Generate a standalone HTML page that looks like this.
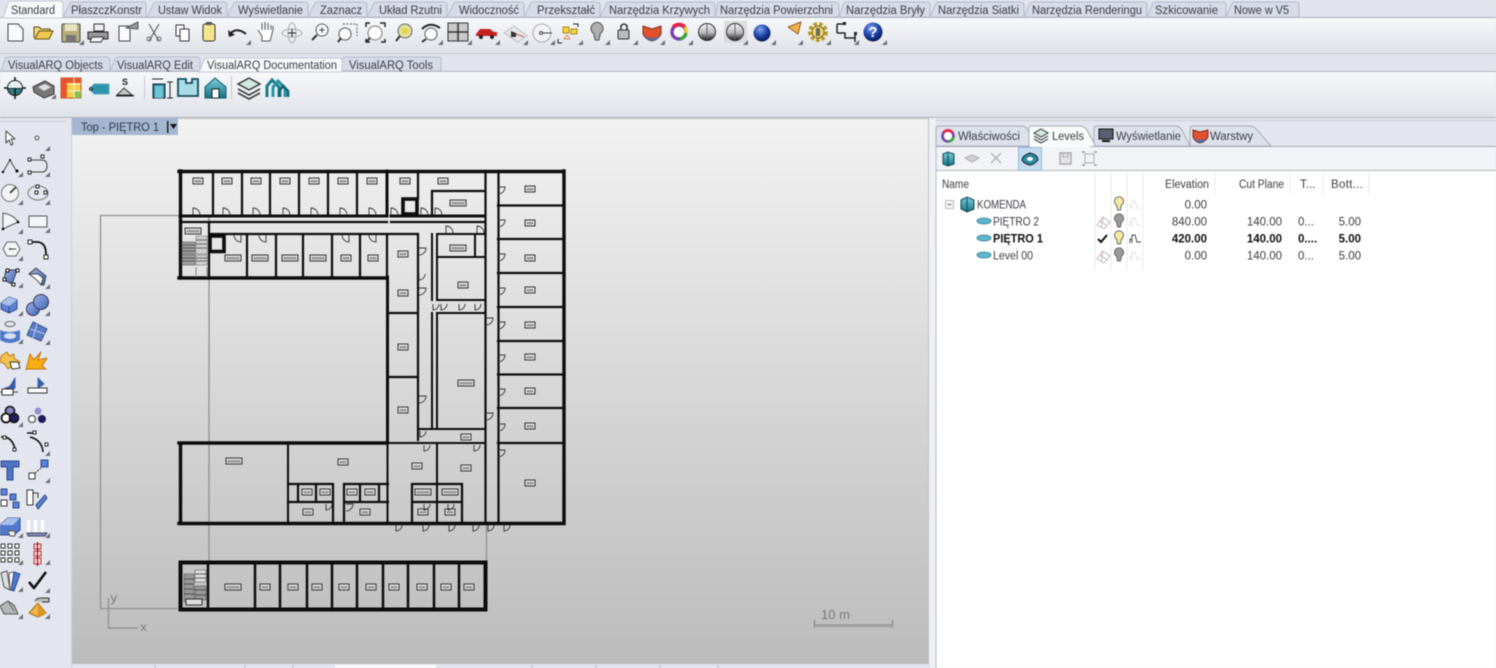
<!DOCTYPE html>
<html lang="pl"><head><meta charset="utf-8"><title>VisualARQ Levels</title>
<style>
html,body{margin:0;padding:0;background:#e3e6ee;width:1496px;height:668px;overflow:hidden}
svg{display:block;filter:blur(.45px)}
text{font-family:"Liberation Sans",sans-serif;font-size:11.5px;fill:#3d3d42}
.v{fill:#2f3a4c}
.r{text-anchor:end}
.b{font-weight:bold;fill:#111}
</style></head><body>
<svg xmlns="http://www.w3.org/2000/svg" width="1496" height="668" viewBox="0 0 1496 668">
<defs>
<linearGradient id="tb" x1="0" y1="0" x2="0" y2="1"><stop offset="0" stop-color="#f7f8fa"/><stop offset="1" stop-color="#dfe2e9"/></linearGradient>
<linearGradient id="vp" x1="0" y1="0" x2="0" y2="1"><stop offset="0" stop-color="#f2f2f2"/><stop offset="1" stop-color="#bcbcbc"/></linearGradient>
<linearGradient id="ball" x1="0" y1="0" x2="0" y2="1"><stop offset="0" stop-color="#f7f7f7"/><stop offset=".55" stop-color="#b8b8b8"/><stop offset="1" stop-color="#111"/></linearGradient>
<radialGradient id="blue" cx=".4" cy=".3" r=".7"><stop offset="0" stop-color="#7fa8ee"/><stop offset=".6" stop-color="#1c3fa8"/><stop offset="1" stop-color="#0a1a50"/></radialGradient>
<linearGradient id="bl" x1="0" y1="0" x2="1" y2="1"><stop offset="0" stop-color="#9db4e6"/><stop offset="1" stop-color="#3f63b5"/></linearGradient>
<linearGradient id="teal" x1="0" y1="0" x2="0" y2="1"><stop offset="0" stop-color="#7fd0dc"/><stop offset="1" stop-color="#14707f"/></linearGradient>
<polygon id="g" points="0,5 5,5 5,0" fill="#6d6f75"/>
<path id="du" d="M0 0V-7A7 7 0 0 1 7 0" fill="none" stroke="#333" stroke-width=".9"/>
<path id="dd" d="M0 0V7A7 7 0 0 1-7 0" fill="none" stroke="#333" stroke-width=".9"/>
<path id="dr" d="M0 0H7A7 7 0 0 1 0 7" fill="none" stroke="#333" stroke-width=".9"/>
<path id="db" d="M0 0V6A6 6 0 0 0 6 0" fill="none" stroke="#333" stroke-width=".9"/>
<g id="s"><rect x="-5" y="-3" width="10" height="6" fill="#e6e6e6" stroke="#333" stroke-width="1"/><rect x="-3.5" y="-1" width="7" height="2.5" fill="#999"/></g>
<g id="m"><rect x="-8" y="-3" width="16" height="6" fill="#e0e0e0" stroke="#333" stroke-width="1"/><rect x="-6.5" y="-1" width="13" height="2.5" fill="#999"/></g>
<g id="bulb"><path d="M0-6A3.8 3.8 0 0 1 2 1L1.2 5H-1.2L-2 1A3.8 3.8 0 0 1 0-6Z" stroke="#666" stroke-width=".8"/></g>
<g id="lamp"><path d="M-5 5V1H-3V5M-3 0V-3H0L2 4H6" fill="none" stroke-width="1"/></g>
<g id="lv"><ellipse rx="7" ry="3" fill="#5eb7cc" stroke="#2d7d90" stroke-width=".8"/></g>
<g id="ch"><path d="M-5 0L-2 3 4-4" fill="none" stroke-width="2"/></g>
</defs>

<rect width="1496" height="668" fill="#e3e6ee"/>
<rect y="0" width="1496" height="17" fill="#e1e4ec"/>
<rect y="17" width="1496" height="1" fill="#aeb2ba"/>
<rect y="18" width="1496" height="35" fill="url(#tb)"/>
<rect y="53" width="1496" height="1" fill="#c2c5cc"/>
<rect y="54" width="1496" height="17" fill="#e1e4ec"/>
<rect y="71" width="1496" height="1.5" fill="#aeb1b7"/>
<rect y="72" width="1496" height="45" fill="url(#tb)"/>
<rect y="117" width="1496" height="1" fill="#b2b5bb"/>
<rect x="0" y="121" width="66" height="1" fill="#c9ccd3"/>
<rect x="936" y="120" width="560" height="1" fill="#c9ccd3"/>

<g fill="#d7dbe8" stroke="#b6bbcb" stroke-width="1">
<path d="M63 17L70 3Q71 2 74 2H143Q146 2 146 5V17Z"/>
<path d="M147 17L154 3Q155 2 158 2H223Q227 2 227 5V17Z"/>
<path d="M227 17L234 3Q235 2 238 2H304Q308 2 308 5V17Z"/>
<path d="M308 17L315 3Q316 2 319 2H363Q367 2 367 5V17Z"/>
<path d="M367 17L374 3Q375 2 378 2H443Q447 2 447 5V17Z"/>
<path d="M447 17L454 3Q455 2 458 2H520Q524 2 524 5V17Z"/>
<path d="M524 17L531 3Q532 2 535 2H596Q600 2 600 5V17Z"/>
<path d="M600 17L607 3Q608 2 611 2H711Q715 2 715 5V17Z"/>
<path d="M715 17L718 3Q719 2 722 2H834Q839 2 839 5V17Z"/>
<path d="M839 17L844 3Q845 2 848 2H926Q930 2 930 5V17Z"/>
<path d="M930 17L936 3Q937 2 940 2H1020Q1024 2 1024 5V17Z"/>
<path d="M1024 17L1030 3Q1031 2 1034 2H1143Q1147 2 1147 5V17Z"/>
<path d="M1147 17L1153 3Q1154 2 1157 2H1222Q1226 2 1226 5V17Z"/>
<path d="M1226 17L1232 3Q1233 2 1236 2H1295Q1299 2 1299 5V17Z"/>
</g>
<path d="M3 18L8 3Q9 1 12 1H60Q63 1 63 4V18Z" fill="#f8f9fb" stroke="#c2c6d2"/>
<g>
<text x="11" y="14" textLength="44" lengthAdjust="spacingAndGlyphs">Standard</text>
<text x="71" y="14" textLength="71" lengthAdjust="spacingAndGlyphs">PłaszczKonstr</text>
<text x="158" y="14" textLength="64" lengthAdjust="spacingAndGlyphs">Ustaw Widok</text>
<text x="238" y="14" textLength="65" lengthAdjust="spacingAndGlyphs">Wyświetlanie</text>
<text x="320" y="14" textLength="42" lengthAdjust="spacingAndGlyphs">Zaznacz</text>
<text x="379" y="14" textLength="63" lengthAdjust="spacingAndGlyphs">Układ Rzutni</text>
<text x="459" y="14" textLength="60" lengthAdjust="spacingAndGlyphs">Widoczność</text>
<text x="537" y="14" textLength="58" lengthAdjust="spacingAndGlyphs">Przekształć</text>
<text x="609" y="14" textLength="101" lengthAdjust="spacingAndGlyphs">Narzędzia Krzywych</text>
<text x="720" y="14" textLength="113" lengthAdjust="spacingAndGlyphs">Narzędzia Powierzchni</text>
<text x="846" y="14" textLength="79" lengthAdjust="spacingAndGlyphs">Narzędzia Bryły</text>
<text x="938" y="14" textLength="81" lengthAdjust="spacingAndGlyphs">Narzędzia Siatki</text>
<text x="1032" y="14" textLength="110" lengthAdjust="spacingAndGlyphs">Narzędzia Renderingu</text>
<text x="1155" y="14" textLength="63" lengthAdjust="spacingAndGlyphs">Szkicowanie</text>
<text x="1234" y="14" textLength="55" lengthAdjust="spacingAndGlyphs">Nowe w V5</text>
</g>

<g fill="#d7dbe8" stroke="#b6bbcb">
<path d="M1 71L5 59Q6 57 9 57H106Q110 57 110 60V71Z"/>
<path d="M110 71L115 59Q116 57 119 57H196Q200 57 200 60V71Z"/>
<path d="M342 71V60Q342 57 345 57H438Q441 57 441 60V71Z"/>
</g>
<path d="M199 72L204 60Q205 58 208 58H339Q342 58 342 61V72Z" fill="#f8f9fb" stroke="#c2c6d2"/>
<text x="8" y="69" textLength="95" lengthAdjust="spacingAndGlyphs">VisualARQ Objects</text>
<text x="117" y="69" textLength="76" lengthAdjust="spacingAndGlyphs">VisualARQ Edit</text>
<text x="207" y="69" textLength="130" lengthAdjust="spacingAndGlyphs">VisualARQ Documentation</text>
<text x="349" y="69" textLength="84" lengthAdjust="spacingAndGlyphs">VisualARQ Tools</text>

<g stroke-linejoin="round">
<path d="M8 24H18L23 29V41H8Z" fill="#fbfbfb" stroke="#444"/>
<path d="M34 38V27H39L41 29H50V31H39L35 39H49L53 31H50" fill="#f2d67e" stroke="#5a4a10"/>
<path d="M35 39L39 31H53L49 39Z" fill="#f0c84f" stroke="#6a5512"/>
<rect x="62" y="24" width="18" height="18" rx="1" fill="#b7ae7c" stroke="#4b4a3c"/><rect x="65" y="24" width="12" height="7" fill="#e7e2c2"/><rect x="66" y="35" width="10" height="7" fill="#777"/>
<use href="#g" x="79" y="40"/>
<path d="M94 24H104V31H94Z" fill="#eee" stroke="#333"/><path d="M88 32H108V39H88Z" fill="#999" stroke="#222"/><path d="M92 37H104L101 42H90Z" fill="#f2f2f2" stroke="#333"/>
<path d="M119 26H130V41H119Z" fill="#fbfbfb" stroke="#444"/><path d="M126 28L138 22V29Z" fill="#999" stroke="#555"/>
<path d="M149 24L159 41M159 24L149 41" stroke="#555" stroke-width="1.1" fill="none"/><circle cx="149" cy="39" r="2" fill="none" stroke="#666"/><circle cx="159" cy="39" r="2" fill="none" stroke="#666"/>
<path d="M176 25H184V36H176Z" fill="#fff" stroke="#333"/><path d="M180 29H189V41H180Z" fill="#fff" stroke="#333"/>
<rect x="203" y="24" width="12" height="17" rx="2" fill="#f3e48e" stroke="#333"/><rect x="206" y="22" width="6" height="3" fill="#555"/>
<path d="M229 35Q236 26 246 34" fill="none" stroke="#222" stroke-width="2"/><path d="M228 30L229 37 235 35Z" fill="#222"/><use href="#g" x="246" y="40"/>
<path d="M258 30L262 36V41H270L273 30V26M262 30V23M265 30V22M268 30V23M271 30V25" fill="#fff" stroke="#555" stroke-width="1"/>
<ellipse cx="292" cy="33" rx="10" ry="4" fill="none" stroke="#aaa"/><ellipse cx="292" cy="33" rx="4" ry="10" fill="none" stroke="#aaa"/><path d="M288 33H296M292 29V37" stroke="#222"/>
<circle cx="322" cy="30" r="6" fill="#fff" stroke="#555"/><path d="M317 35L312 40" stroke="#333" stroke-width="2"/><path d="M319 30H325M322 27V33" stroke="#444"/>
<circle cx="345" cy="34" r="6" fill="#fff" stroke="#555"/><path d="M341 38L338 42" stroke="#333" stroke-width="2"/><path d="M343 24H357V36" fill="none" stroke="#555" stroke-dasharray="2 1.5"/>
<circle cx="375" cy="33" r="7" fill="#fff" stroke="#777"/><path d="M370 38L366 42" stroke="#333" stroke-width="2"/><path d="M366 27V23H370M380 23H385V27M366 39V42H370M385 39V42H381" fill="none" stroke="#222" stroke-width="1.5"/>
<circle cx="405" cy="31" r="7" fill="#dfe09d" stroke="#666"/><circle cx="405" cy="31" r="3" fill="#e6d23a"/><path d="M400 36L396 41" stroke="#333" stroke-width="2"/>
<circle cx="431" cy="34" r="6" fill="#fff" stroke="#555"/><path d="M422 29Q430 21 440 28" fill="none" stroke="#222" stroke-width="2"/><path d="M426 39L422 42" stroke="#333" stroke-width="2"/><use href="#g" x="438" y="40"/>
<rect x="448" y="23" width="20" height="18" fill="#c9c9c9" stroke="#333"/><path d="M458 23V41M448 32H468" stroke="#333" stroke-width="1.5"/><use href="#g" x="467" y="40"/>
<path d="M476 34L480 29H490L494 32H497V36H476Z" fill="#c71f1f"/><circle cx="481" cy="37" r="2" fill="#222"/><circle cx="492" cy="37" r="2" fill="#222"/><use href="#g" x="495" y="40"/>
<path d="M504 33L514 26 527 36 518 42Z" fill="#e8e8e8" stroke="#bbb"/><path d="M511 31V37H516V33Z" fill="#333"/><path d="M516 34L524 37" stroke="#c55"/><use href="#g" x="523" y="40"/>
<circle cx="542" cy="33" r="9" fill="#f3f3f3" stroke="#aaa"/><path d="M542 33H552" stroke="#444"/><circle cx="541" cy="33" r="1.5" fill="none" stroke="#444"/><use href="#g" x="550" y="40"/>
<rect x="563" y="27" width="6" height="6" fill="#f4d23c" stroke="#a58a1a"/><rect x="571" y="29" width="6" height="5" fill="#f4d23c" stroke="#a58a1a"/><path d="M567 35L570 39H564Z" fill="none" stroke="#d86"/><path d="M573 24H578V27M558 39V43H562" fill="none" stroke="#222"/><use href="#g" x="578" y="40"/>
<use href="#bulb" transform="translate(597 32) scale(1.6)" fill="#b0b0b0"/><use href="#g" x="605" y="40"/>
<rect x="618" y="30" width="11" height="9" rx="1" fill="#bbb" stroke="#333"/><path d="M621 30V26Q624 22 627 26V30" fill="none" stroke="#333" stroke-width="1.6"/><use href="#g" x="633" y="40"/>
<path d="M643 26L652 29 661 26V34Q658 40 652 41 646 40 643 34Z" fill="#e4502a" stroke="#7a2f1e"/><path d="M645 35Q652 42 660 35L658 39 652 41 647 39Z" fill="#4a6fb5"/><use href="#g" x="660" y="40"/>
<circle cx="679" cy="32" r="7" fill="#fff" stroke="#7a3fb0" stroke-width="3.4"/><path d="M673 27A8 8 0 0 1 685 27" fill="none" stroke="#e24" stroke-width="3.4"/><path d="M686 33A8 8 0 0 1 680 39" fill="none" stroke="#3a3" stroke-width="3.4"/><path d="M685 27A8 8 0 0 1 686 33" fill="none" stroke="#ec3" stroke-width="3.4"/><use href="#g" x="688" y="40"/>
<circle cx="707" cy="32" r="8.5" fill="url(#ball)" stroke="#333"/><path d="M707 24V40" stroke="#666"/>
<rect x="724" y="21" width="23" height="22" fill="#dcdcdc"/><circle cx="735" cy="32" r="8.5" fill="url(#ball)" stroke="#333"/><path d="M735 24V40" stroke="#666"/><use href="#g" x="743" y="40"/>
<circle cx="762" cy="33" r="8.5" fill="url(#blue)"/><use href="#g" x="771" y="40"/>
<path d="M788 27L801 22 798 34Z" fill="#f2b04a" stroke="#8a5a20"/><use href="#g" x="798" y="40"/>
<g transform="translate(818 32)"><circle r="8" fill="none" stroke="#b89a2a" stroke-width="4" stroke-dasharray="3.5 2"/><circle r="6" fill="#f3d76a" stroke="#7a6420"/><rect x="-2" y="-4" width="4" height="8" fill="#666"/></g><use href="#g" x="826" y="40"/>
<path d="M837 24H845M837 24V33M837 33H845V38H855V42M855 38V33" fill="none" stroke="#222" stroke-width="1.5"/><rect x="843" y="22" width="3" height="3" fill="#222"/><rect x="854" y="32" width="3" height="3" fill="#222"/><use href="#g" x="854" y="40"/>
<circle cx="873" cy="32" r="9.5" fill="url(#blue)"/><text x="873" y="37" text-anchor="middle" style="font-size:15px;font-weight:bold;fill:#fff">?</text><use href="#g" x="882" y="40"/>
</g>

<circle cx="15" cy="88" r="7.5" fill="#2f7d80" stroke="#111"/><path d="M15 77V99M4 88H26" stroke="#111" stroke-width="1.5"/><path d="M8 88A7 7 0 0 1 22 88Z" fill="#e8f2f2"/>
<path d="M33 87L45 81 54 86V94L44 98 34 92Z" fill="#777" stroke="#333"/><path d="M38 87L45 84 51 87 44 91Z" fill="#ddd"/><use href="#g" x="51" y="94"/>
<rect x="61" y="78" width="20" height="20" fill="#f7cf45" stroke="#b5551c"/><rect x="61" y="78" width="20" height="5" fill="#e6562a"/><rect x="61" y="78" width="6" height="20" fill="#e6562a"/><rect x="74" y="91" width="7" height="7" fill="#8cc152"/><path d="M67 84H81M67 91H81M74 78V98" stroke="#fff" stroke-width=".8"/>
<path d="M94 84H109V94H94L90 89Z" fill="#2d94ac" stroke="#5fa8b8"/><circle cx="91" cy="89" r="1.5" fill="none" stroke="#333"/>
<path d="M117 95H132L124 88Z" fill="#c7c7c7" stroke="#333"/><text x="122" y="85" style="font-size:9px;font-weight:bold;fill:#222">S</text><rect x="116" y="95" width="18" height="1.5" fill="#222"/>
<rect x="144" y="76" width="1" height="23" fill="#c5c8ce"/>
<path d="M153 84H165V98H153Z" fill="#2b8ca0" stroke="#123"/><rect x="155" y="86" width="8" height="12" fill="#6fc4d4"/><path d="M152 79H163M170 82V98M167 82H173M167 98H173" stroke="#222" fill="none"/>
<path d="M178 79H186V83H192V79H198V96H178Z" fill="#a8dbe6" stroke="#124c5c" stroke-width="1.8"/>
<path d="M205 87L215 78 226 87V98H205Z" fill="url(#teal)" stroke="#0d5866"/><path d="M212 98V89H219V98Z" fill="#fff" stroke="#123"/>
<rect x="231" y="76" width="1" height="23" fill="#c5c8ce"/>
<path d="M238 84L249 78 260 84 249 90Z" fill="#cfe8e0" stroke="#333" stroke-width="1.4"/><path d="M238 89L249 95 260 89M238 93L249 99 260 93" fill="none" stroke="#444" stroke-width="1.7"/>
<path d="M267 97V86L272 80 279 87V97" fill="none" stroke="#1a7d8e" stroke-width="3"/><path d="M273 97V87L278 81 285 88V97" fill="none" stroke="#2a95a6" stroke-width="3"/><path d="M280 97V90L283 86 288 91V97" fill="none" stroke="#0f6474" stroke-width="2.6"/>

<g stroke-linejoin="round">
<path d="M6 131V143L9 140 11 145 13 144 11 139H15Z" fill="#fff" stroke="#444"/>
<circle cx="37" cy="138" r="2" fill="none" stroke="#555"/><use href="#g" x="45" y="146"/>
<path d="M3 172L10 160 17 172" fill="none" stroke="#444"/><circle cx="3" cy="172" r="1.2"/><circle cx="10" cy="160" r="1"/><circle cx="17" cy="171" r="1.5"/><use href="#g" x="18" y="172"/>
<path d="M30 160H42Q47 160 47 166T42 172H30" fill="none" stroke="#444"/><rect x="28" y="158" width="3" height="3" fill="#fff" stroke="#222"/><rect x="28" y="171" width="3" height="3" fill="#fff" stroke="#222"/><rect x="41" y="155" width="3" height="3" fill="#fff" stroke="#222"/><use href="#g" x="45" y="172"/>
<circle cx="10" cy="193" r="8.5" fill="#f3f3f3" stroke="#777"/><path d="M10 193L16 187" stroke="#333" stroke-width="1.6"/><use href="#g" x="18" y="200"/>
<ellipse cx="38" cy="193" rx="10" ry="7" fill="none" stroke="#777"/><rect x="35" y="191" width="3" height="3" fill="#fff" stroke="#222"/><rect x="36" y="185" width="3" height="3" fill="#fff" stroke="#222"/><rect x="44" y="191" width="3" height="3" fill="#fff" stroke="#222"/><use href="#g" x="45" y="200"/>
<path d="M3 213V229L18 222Q14 215 3 213Z" fill="#f4f5f8" stroke="#555"/><circle cx="3" cy="229" r="1.3"/><circle cx="18" cy="222" r="1.3"/><use href="#g" x="18" y="229"/>
<rect x="29" y="216" width="18" height="11" fill="#f4f5f8" stroke="#555"/><use href="#g" x="45" y="228"/>
<path d="M3 249L7 242H16L20 249 16 256H7Z" fill="#f4f5f8" stroke="#666"/><path d="M10 249H16" stroke="#444"/><circle cx="10" cy="249" r="1" fill="#333"/><use href="#g" x="18" y="256"/>
<path d="M29 242H38Q46 243 46 254V258" fill="none" stroke="#111" stroke-width="1.8"/><rect x="28" y="240" width="4" height="4" fill="#fff" stroke="#222"/><rect x="44" y="255" width="4" height="4" fill="#fff" stroke="#222"/>
<path d="M6 270H17L12 284 4 280Z" fill="url(#bl)" stroke="#335"/><g fill="#fff" stroke="#111"><rect x="3" y="278" width="3" height="3"/><rect x="6" y="269" width="3" height="3"/><rect x="16" y="269" width="3" height="3"/><rect x="12" y="283" width="3" height="3"/></g><use href="#g" x="18" y="283"/>
<path d="M29 274L36 268 46 276 44 285H41L43 278 38 274Z" fill="url(#bl)" stroke="#444"/><path d="M29 274L38 274 43 278 41 285Q38 280 29 274Z" fill="#fff" stroke="#444"/><use href="#g" x="45" y="284"/>
<path d="M1 303L9 297 17 300V309L9 313 1 309Z" fill="#5d82d4" stroke="#2d4a90"/><path d="M1 303L9 306 17 300 9 297Z" fill="#a9c0ec"/><path d="M9 306V313" stroke="#2d4a90"/><use href="#g" x="18" y="311"/>
<circle cx="33" cy="309" r="6.5" fill="url(#bl)" stroke="#335"/><circle cx="41" cy="302" r="7.5" fill="url(#bl)" stroke="#335"/><use href="#g" x="45" y="311"/>
<ellipse cx="10" cy="324" rx="5" ry="2.5" fill="none" stroke="#666"/><path d="M0 330Q10 334 20 330V340Q10 346 0 340Z" fill="#4f78cd"/><ellipse cx="10" cy="336" rx="6" ry="3" fill="#d5e0f5"/><use href="#g" x="18" y="339"/>
<path d="M33 322L47 329 41 341 27 335Z" fill="#5c7cc8" stroke="#34508f"/><path d="M37 324L33 338M30 329L45 334" stroke="#b9c9ea"/><use href="#g" x="45" y="340"/>
<path d="M1 356L7 352 9 356 14 354 14 358 20 362 17 368 12 366 8 369 5 364 0 362Z" fill="#f1c24f" stroke="#b77a18"/><path d="M10 362L18 362 20 368 12 369Z" fill="#fff" stroke="#333"/>
<path d="M26 370L30 354 34 360 41 352 38 360 47 358 42 366 46 369H26Z" fill="#f5ae16" stroke="#c57208"/>
<path d="M2 389H14V384M15 378L9 388H15Z" fill="#395ea8" stroke="#395ea8"/><path d="M0 392H18" stroke="#444"/><rect x="2" y="389" width="11" height="6" fill="#fff" stroke="#333"/>
<path d="M38 378V388L44 384Z" fill="#395ea8" stroke="#395ea8"/><rect x="28" y="388" width="19" height="5" fill="#fff" stroke="#333"/>
<circle cx="10" cy="411" r="4.5" fill="#8d86c8" stroke="#111" stroke-width="1.6"/><circle cx="6" cy="418" r="4.5" fill="#fff" stroke="#111" stroke-width="1.8"/><circle cx="14" cy="418" r="4.5" fill="#221f60" stroke="#111" stroke-width="1.6"/><use href="#g" x="18" y="422"/>
<circle cx="38" cy="411" r="3.5" fill="#9590d0"/><circle cx="32" cy="419" r="3.5" fill="#fff" stroke="#333"/><circle cx="42" cy="419" r="4" fill="#1e1b5e"/>
<path d="M1 437Q12 436 15 449" fill="none" stroke="#111" stroke-width="1.6"/><rect x="13" y="448" width="3" height="3" fill="#fff" stroke="#222"/><rect x="3" y="436" width="3" height="3" fill="#fff" stroke="#222"/>
<path d="M27 433H34M30 437Q42 440 43 452" fill="none" stroke="#111" stroke-width="1.6"/><rect x="33" y="431" width="3" height="3" fill="#fff" stroke="#222"/><rect x="45" y="443" width="3" height="3" fill="#fff" stroke="#222"/><use href="#g" x="45" y="451"/>
<path d="M1 461H19V467H13V480H7V467H1Z" fill="#4e74c6" stroke="#2d4788"/>
<rect x="29" y="473" width="6" height="6" fill="#fff" stroke="#333"/><rect x="41" y="460" width="7" height="7" fill="#5a82d6" stroke="#2d4788"/><path d="M35 473L41 468" stroke="#333" stroke-dasharray="2 1"/><use href="#g" x="45" y="478"/>
<rect x="1" y="489" width="6" height="6" fill="#5a82d6" stroke="#2d4788"/><rect x="10" y="494" width="6" height="6" fill="#5a82d6" stroke="#2d4788"/><rect x="1" y="500" width="6" height="6" fill="#fff" stroke="#333"/><rect x="13" y="502" width="6" height="6" fill="#5a82d6" stroke="#2d4788"/>
<rect x="27" y="490" width="6" height="15" fill="#fff" stroke="#333"/><path d="M36 505L45 495 47 498 38 509Z" fill="#5a82d6" stroke="#2d4788"/><path d="M33 493H38V498" fill="none" stroke="#333"/>
<path d="M0 525L8 518H20V530L14 535H0Z" fill="#4f78cd" stroke="#2d4788"/><path d="M0 525L8 518H20L13 525Z" fill="#a9c0ec"/><path d="M8 531H15V536H10Z" fill="#eee" stroke="#555"/><use href="#g" x="18" y="533"/>
<rect x="27" y="520" width="3" height="13" fill="#fff"/><rect x="34" y="520" width="3" height="13" fill="#fff"/><rect x="41" y="520" width="3" height="13" fill="#fff"/><path d="M27 533H47L45 536H28Z" fill="#7d93c4" stroke="#445"/><use href="#g" x="45" y="533"/>
<g fill="#fff" stroke="#333"><rect x="1" y="544" width="4" height="4"/><rect x="8" y="544" width="4" height="4"/><rect x="15" y="544" width="4" height="4"/><rect x="1" y="551" width="4" height="4"/><rect x="8" y="551" width="4" height="4"/><rect x="15" y="551" width="4" height="4"/><rect x="1" y="558" width="4" height="4"/><rect x="8" y="558" width="4" height="4"/><rect x="15" y="558" width="4" height="4"/></g><use href="#g" x="18" y="560"/>
<g fill="#f4d8d8" stroke="#b33"><rect x="34" y="544" width="7" height="5"/><rect x="34" y="551" width="7" height="5"/><rect x="34" y="558" width="7" height="6"/></g><path d="M37.5 542V566" stroke="#800"/><use href="#g" x="45" y="560"/>
<path d="M1 573L7 571 10 590 4 587Z" fill="#ddd" stroke="#555"/><path d="M9 573L14 572 13 590 10 590Z" fill="#fff" stroke="#555"/><path d="M14 572L20 574 14 591 11 590Z" fill="#4f78cd" stroke="#2d4788"/><use href="#g" x="18" y="587"/>
<path d="M29 582L34 588 46 572" fill="none" stroke="#111" stroke-width="2.6"/><use href="#g" x="45" y="588"/>
<path d="M0 606L8 601 14 605 18 614H4Z" fill="#b5b5b5" stroke="#555"/><path d="M8 601L14 611" stroke="#666"/><use href="#g" x="18" y="614"/>
<path d="M29 613L38 603 46 613 38 617Z" fill="#f2b54a" stroke="#9a6b17"/><path d="M38 603L38 617 46 613Z" fill="#e09320"/><path d="M35 601Q37 598 41 598H49V602H42" fill="#bbb" stroke="#333"/><use href="#g" x="45" y="614"/>
</g>
<rect x="71" y="118" width="1.5" height="550" fill="#cfd2d9"/>

<rect x="72" y="118" width="856" height="546" fill="url(#vp)"/>
<rect x="72" y="118" width="856" height="1" fill="#c5c5c5"/>
<rect x="928" y="118" width="1" height="548" fill="#c2c2c2"/>
<rect x="929" y="118" width="7" height="550" fill="#eef0f5"/>
<rect x="72" y="118" width="106" height="17" fill="#a4b6d0"/>
<text class="v" x="81" y="131" textLength="78" lengthAdjust="spacingAndGlyphs">Top - PIĘTRO 1</text>
<rect x="167" y="121" width="1.5" height="12" fill="#222"/><path d="M170 124H177L173.5 129Z" fill="#111"/>

<path d="M178 215.5H100.5V608.5H178M209 215V562M486.5 523V561" fill="none" stroke="#8f8f8f" stroke-width="1.3"/>
<path d="M108.5 598V628H138" fill="none" stroke="#8a8a8a" stroke-width="1.2"/>
<text x="110" y="602" style="font-size:13px;fill:#777;font-family:'Liberation Mono',monospace">y</text>
<text x="140" y="631" style="font-size:12px;fill:#777;font-family:'Liberation Mono',monospace">x</text>

<g fill="none" stroke="#0c0c0c" stroke-linecap="square">
<path stroke-width="3.4" d="M179 171.5H564M564 171V523M180.5 171V277M179 278H387M179 523.5H564M179 443H387M180.5 443V523"/>
<path stroke-width="3" d="M387 171V216M387.5 277V443M180 216H387M391 216H485"/>
<path stroke-width="2.2" d="M485.5 171V523M498.5 171V523M180 222H387M391 222H485"/>
<path stroke-width="2.2" d="M213 172V216M242 172V216M270 172V216M299 172V216M328 172V216M357 172V216M418 172V198M432 191H485M432 191V216M209 234H387M209 222V234M209 234V277M247 234V277M276 234V277M303 234V277M332 234V277M360 234V277M387 234V277M389 234H418M418 234V440M389 313H418M389 377H418"/>
<path stroke-width="2.2" d="M498 205.5H564M498 239H564M498 273H564M498 307H564M498 341H564M498 374.5H564M498 408H564M498 443H564"/>
<path stroke-width="2" d="M432 234V300M437 234V300M432 313V429M437 313V429M437 234H485M437 257H485M475 234V257M437 300H485M437 313H485M437 429H485M418 429H437M387 443H485M288 443V523M437 443V523M387.5 443V523"/>
<path stroke-width="2.2" d="M288 484H333M288 502H333M298 484V502M316 484V502M333 484V523M344 484H388M344 502H388M360 484V502M379 484V502M344 484V523M412 484H462M412 502H462M412 484V523M462 484V523"/>
<rect x="403" y="199" width="14" height="15" stroke-width="3.6"/>
<rect x="210" y="236" width="14" height="15.5" stroke-width="3.6"/>
</g>
<g fill="#9e9e9e" stroke="#555" stroke-width=".6"><rect x="182" y="242" width="13" height="12"/><rect x="182" y="255" width="13" height="10"/></g>
<g fill="#cfcfcf" stroke="#777" stroke-width=".6"><rect x="196" y="236" width="11" height="18"/><rect x="196" y="255" width="11" height="10"/></g>
<path d="M182 245H195M182 248H195M182 251H195M182 258H195M182 261H195M196 240H207M196 244H207M196 248H207M196 258H207M196 261H207" stroke="#444" stroke-width=".7"/>
<path d="M196 267V277M207 267V277" stroke="#888"/>
<g fill="none" stroke="#0c0c0c">
<rect x="180.5" y="562.5" width="305" height="47" stroke-width="4"/>
<path stroke-width="2.5" d="M208 563V609M255 563V609M280 563V609M307 563V609M332 563V609M357 563V609M383 563V609M408 563V609M434 563V609M459 563V609"/>
</g>
<g fill="#999" stroke="#444" stroke-width=".5"><rect x="184" y="574" width="10" height="28"/><rect x="195" y="570" width="11" height="12" fill="#ddd"/><rect x="195" y="586" width="11" height="14"/></g>
<path d="M184 579H194M184 584H194M184 589H194M184 594H194M195 574H206M195 578H206M195 590H206M195 595H206" stroke="#333" stroke-width=".7"/>
<rect x="186" y="599" width="16" height="6" fill="#ddd" stroke="#333"/>

<g>
<use href="#s" x="198" y="181"/><use href="#s" x="227" y="181"/><use href="#s" x="256" y="181"/><use href="#s" x="285" y="181"/><use href="#s" x="314" y="181"/><use href="#s" x="343" y="181"/><use href="#s" x="372" y="181"/><use href="#s" x="405" y="181"/><use href="#s" x="443" y="181"/>
<use href="#m" x="458" y="203"/><use href="#m" x="193" y="231"/>
<use href="#s" x="530" y="189"/><use href="#s" x="530" y="223"/><use href="#s" x="530" y="258"/><use href="#s" x="530" y="290"/><use href="#s" x="530" y="325"/><use href="#s" x="530" y="357"/><use href="#s" x="530" y="391"/><use href="#s" x="530" y="426"/><use href="#s" x="530" y="483"/>
<use href="#m" x="233" y="258"/><use href="#m" x="260" y="258"/><use href="#m" x="290" y="258"/><use href="#m" x="318" y="258"/><use href="#s" x="346" y="258"/><use href="#s" x="373" y="258"/>
<use href="#s" x="403" y="254"/><use href="#s" x="403" y="293"/><use href="#s" x="403" y="347"/><use href="#s" x="403" y="410"/>
<use href="#m" x="458" y="248"/><use href="#s" x="463" y="285"/><use href="#m" x="466" y="383"/><use href="#s" x="466" y="437"/>
<use href="#m" x="234" y="461"/><use href="#s" x="343" y="462"/><use href="#s" x="417" y="466"/><use href="#s" x="466" y="468"/><use href="#s" x="308" y="512"/><use href="#s" x="365" y="512"/>
<use href="#s" x="307" y="492"/><use href="#s" x="325" y="492"/><use href="#s" x="352" y="492"/><use href="#s" x="370" y="492"/>
<use href="#m" x="423" y="492"/><use href="#m" x="450" y="492"/><use href="#s" x="423" y="512"/><use href="#s" x="450" y="512"/>
<use href="#m" x="233" y="587"/><use href="#s" x="265" y="587"/><use href="#s" x="293" y="587"/><use href="#s" x="317" y="587"/><use href="#s" x="344" y="587"/><use href="#s" x="371" y="587"/><use href="#s" x="394" y="587"/><use href="#s" x="422" y="587"/><use href="#s" x="446" y="587"/><use href="#s" x="469" y="587"/>
</g>
<g>
<use href="#du" x="193" y="215"/><use href="#du" x="223" y="215"/><use href="#du" x="253" y="215"/><use href="#du" x="283" y="215"/><use href="#du" x="311" y="215"/><use href="#du" x="340" y="215"/><use href="#du" x="369" y="215"/><use href="#du" x="391" y="215"/><use href="#du" x="421" y="215"/><use href="#du" x="435" y="215"/>
<use href="#du" x="446" y="233"/><use href="#du" x="477" y="233"/>
<use href="#dd" x="241" y="235"/><use href="#dd" x="266" y="235"/><use href="#dd" x="349" y="235"/><use href="#dd" x="376" y="235"/>
<use href="#dr" x="498" y="187"/><use href="#dr" x="498" y="220"/><use href="#dr" x="498" y="254"/><use href="#dr" x="498" y="288"/><use href="#dr" x="498" y="322"/><use href="#dr" x="498" y="355"/><use href="#dr" x="498" y="389"/><use href="#dr" x="498" y="424"/><use href="#dr" x="498" y="450"/>
<use href="#dr" x="419" y="248"/><use href="#dr" x="419" y="288"/><use href="#dr" x="419" y="396"/><use href="#dr" x="486" y="318"/><use href="#dr" x="486" y="413"/>
<use href="#db" x="419" y="274"/><use href="#db" x="433" y="304"/><use href="#db" x="441" y="304"/><use href="#db" x="459" y="304"/><use href="#db" x="475" y="304"/><use href="#db" x="420" y="431"/>
<use href="#db" x="424" y="445"/><use href="#db" x="474" y="445"/>
<use href="#db" x="396" y="525"/><use href="#db" x="423" y="525"/><use href="#db" x="449" y="525"/><use href="#db" x="473" y="525"/><use href="#db" x="488" y="525"/><use href="#db" x="504" y="525"/>
<use href="#db" x="326" y="504"/><use href="#dr" x="346" y="504"/><use href="#db" x="424" y="504"/><use href="#db" x="448" y="504"/>
</g>

<text x="821" y="619" style="font-size:13px;fill:#7a7a7a">10 m</text>
<path d="M814.5 620V628M892.5 620V628M814 625H893" fill="none" stroke="#8c8c8c" stroke-width="1.3"/>
<path d="M814 626.5H893" stroke="#a2a2a2" stroke-width="1.3"/>

<rect x="72" y="664" width="856" height="4" fill="#e3e6ee"/>
<rect x="335" y="665" width="101" height="3" fill="#fbfbfb"/>
<path d="M155 665V668M245 665V668M293 665V668M532 665V668M596 665V668M660 665V668M718 665V668" stroke="#b2b5bb"/>

<rect x="936" y="122" width="560" height="546" fill="#ffffff"/>
<rect x="936" y="122" width="560" height="24" fill="#e3e6ee"/>
<rect x="935.5" y="146" width="1" height="522" fill="#b8bbc2"/>
<g fill="#dde1ea" stroke="#a8acb8">
<path d="M936 146V129Q936 126 939 126H1022Q1026 126 1029 132L1034 146Z"/>
<path d="M1094 146V129Q1094 126 1097 126H1176Q1180 126 1183 132L1190 146Z"/>
<path d="M1190 146V129Q1190 126 1193 126H1250Q1254 126 1257 130L1271 146Z"/>
</g>
<path d="M1029 147V129Q1029 126 1032 126H1080Q1085 126 1088 132L1096 147Z" fill="#fafbfc" stroke="#a8acb8"/>
<rect x="936" y="146" width="560" height="1" fill="#a8acb8"/>
<rect x="1030" y="146" width="60" height="1.5" fill="#fafbfc"/>
<rect x="936.5" y="147" width="559.5" height="24" fill="#f1f3f7"/>
<rect x="936" y="170" width="560" height="1" fill="#b2b5bb"/>

<circle cx="948" cy="136" r="5.5" fill="#fff" stroke="#7a3fb0" stroke-width="2.6"/><path d="M943.5 132.5A6 6 0 0 1 952.5 132.5" fill="none" stroke="#e24" stroke-width="2.6"/><path d="M953.5 137A6 6 0 0 1 948 141.5" fill="none" stroke="#3a3" stroke-width="2.6"/>
<text x="958" y="140" textLength="62" lengthAdjust="spacingAndGlyphs">Właściwości</text>
<path d="M1034 133L1041 129 1048 133 1041 137Z" fill="#cfe8e0" stroke="#333"/><path d="M1034 136L1041 140 1048 136M1034 139L1041 143 1048 139" fill="none" stroke="#444" stroke-width="1.1"/>
<text x="1052" y="140" textLength="32" lengthAdjust="spacingAndGlyphs">Levels</text>
<rect x="1099" y="129" width="14" height="10" fill="#5a6070" stroke="#111"/><path d="M1102 141H1110" stroke="#111" stroke-width="2"/>
<text x="1116" y="140" textLength="65" lengthAdjust="spacingAndGlyphs">Wyświetlanie</text>
<path d="M1193 130L1200 132 1208 130V137Q1205 142 1200 143 1195 142 1193 137Z" fill="#e4502a" stroke="#7a2f1e"/><path d="M1195 138Q1200 142 1206 138L1204 141 1200 143 1196 141Z" fill="#4a6fb5"/>
<text x="1210" y="140" textLength="43" lengthAdjust="spacingAndGlyphs">Warstwy</text>

<path d="M943 154L948 152 954 154V164L948 166 943 164Z" fill="url(#teal)" stroke="#124c5c"/><path d="M948 153V166" stroke="#0d4c5a"/>
<path d="M965 158L972 155 979 158 972 162Z" fill="#cfcfcf" stroke="#aaa"/>
<path d="M991 153L1001 163M1001 153L991 163" stroke="#b2b2b2" stroke-width="1.4"/>
<rect x="1018.5" y="147.5" width="23" height="23" fill="#c5dcef" stroke="#93bcdc"/>
<path d="M1022 160Q1022 156 1030 153 1038 155 1038 160 1034 165 1030 165 1024 164 1022 160Z" fill="#2d8a9c" stroke="#123"/><ellipse cx="1030" cy="159" rx="3" ry="2" fill="#fff"/>
<path d="M1060 153H1071V164H1060Z" fill="#e4e4e4" stroke="#aaa" stroke-width="1.4"/><path d="M1063 153V157H1068V153" fill="none" stroke="#aaa"/>
<path d="M1085 154H1094V163H1085Z" fill="none" stroke="#aaa"/><path d="M1082 152H1085M1094 152H1097M1082 165H1085M1094 165H1097" stroke="#999" stroke-width="1.6"/>

<path d="M1095 172V270M1111 172V270M1127 172V270M1143 172V270M1215 172V194M1290 172V194M1323 172V194M1369 172V194" stroke="#eaeaea"/>
<text x="942" y="188" textLength="27" lengthAdjust="spacingAndGlyphs">Name</text>
<text x="1165" y="188" textLength="44" lengthAdjust="spacingAndGlyphs">Elevation</text>
<text x="1239" y="188" textLength="45" lengthAdjust="spacingAndGlyphs">Cut Plane</text>
<text x="1300" y="188">T...</text>
<text x="1331" y="188" textLength="32">Bott...</text>

<rect x="945.5" y="200.5" width="8" height="8" fill="#f5f5f5" stroke="#bbb"/><path d="M947.5 204.5H951.5" stroke="#666"/>
<path d="M961 200L967 197 974 200V209L967 212 961 209Z" fill="url(#teal)" stroke="#124c5c"/><path d="M967 198V212" stroke="#0d4c5a"/>
<text x="977" y="208.5" textLength="49" lengthAdjust="spacingAndGlyphs">KOMENDA</text>
<use href="#lv" x="984" y="221"/><use href="#lv" x="984" y="238"/><use href="#lv" x="984" y="255"/>
<text x="993" y="225.5" textLength="46" lengthAdjust="spacingAndGlyphs">PIĘTRO 2</text>
<text class="b" x="993" y="242.5" textLength="50" lengthAdjust="spacingAndGlyphs">PIĘTRO 1</text>
<text x="993" y="259.5" textLength="40" lengthAdjust="spacingAndGlyphs">Level 00</text>

<use href="#bulb" transform="translate(1119 204) scale(1.2)" fill="#f5e8a0"/>
<use href="#bulb" transform="translate(1119 221) scale(1.2)" fill="#9b9b9b"/>
<use href="#bulb" transform="translate(1119 238) scale(1.2)" fill="#f5e8a0"/>
<use href="#bulb" transform="translate(1119 255) scale(1.2)" fill="#9b9b9b"/>
<use href="#lamp" x="1135" y="204" stroke="#e2e2e2"/><use href="#lamp" x="1135" y="221" stroke="#e2e2e2"/><use href="#lamp" x="1135" y="238" stroke="#444"/><use href="#lamp" x="1135" y="255" stroke="#e2e2e2"/>
<g stroke="#c8b8b8" fill="none"><path d="M1097 225L1103 217 1110 222 1104 229ZM1100 221L1107 226M1103 218L1101 228"/><path d="M1097 259L1103 251 1110 256 1104 263ZM1100 255L1107 260M1103 252L1101 262"/></g>
<use href="#ch" x="1103" y="239" stroke="#111"/>

<g>
<text class="r" x="1207" y="208.5">0.00</text>
<text class="r" x="1207" y="225.5">840.00</text>
<text class="r b" x="1207" y="242.5">420.00</text>
<text class="r" x="1207" y="259.5">0.00</text>
<text class="r" x="1282" y="225.5">140.00</text>
<text class="r b" x="1282" y="242.5">140.00</text>
<text class="r" x="1282" y="259.5">140.00</text>
<text x="1298" y="225.5">0...</text>
<text class="b" x="1298" y="242.5">0....</text>
<text x="1298" y="259.5">0...</text>
<text class="r" x="1361" y="225.5">5.00</text>
<text class="r b" x="1361" y="242.5">5.00</text>
<text class="r" x="1361" y="259.5">5.00</text>
</g>
</svg>
</body></html>
